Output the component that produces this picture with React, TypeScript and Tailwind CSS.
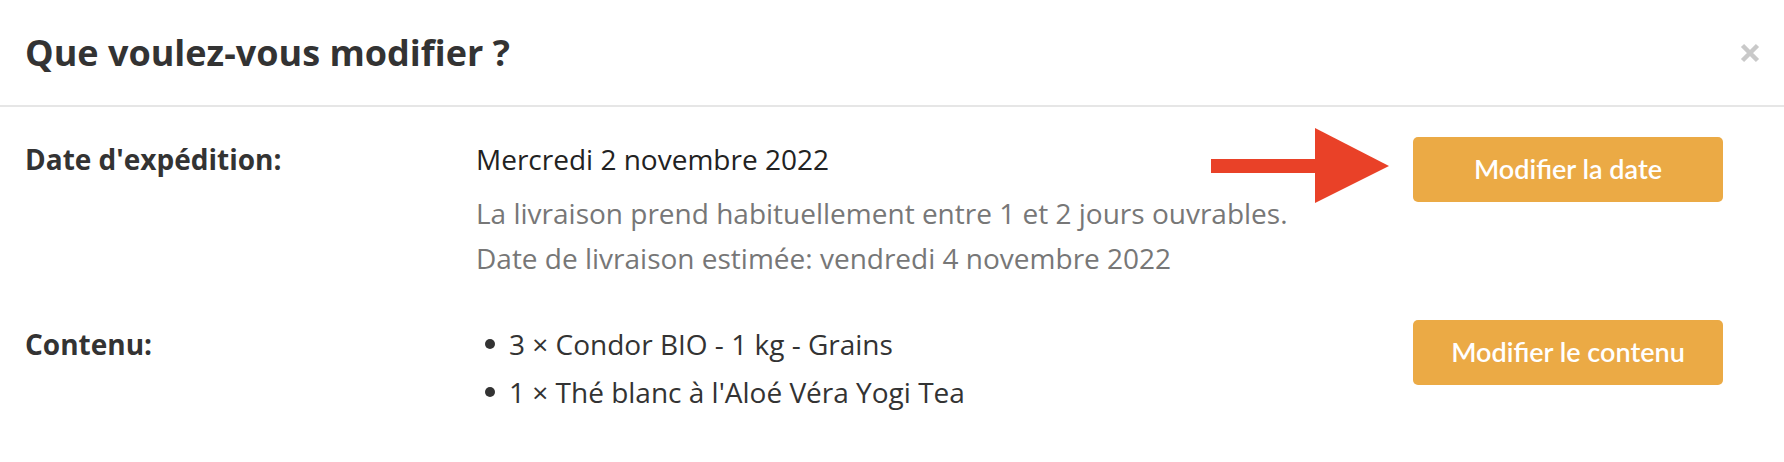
import React from "react";

const items = ["3 × Condor BIO - 1 kg - Grains", "1 × Thé blanc à l'Aloé Véra Yogi Tea"];

function CloseIcon() {
  return (
    <svg width="20" height="20" viewBox="0 0 20 20" aria-hidden="true">
      <path d="M2.5 2.5 L17.5 17.5 M17.5 2.5 L2.5 17.5" stroke="#c9c9c9" strokeWidth="4.5" />
    </svg>
  );
}

function Arrow() {
  return (
    <svg
      width="178"
      height="75"
      viewBox="0 0 178 75"
      className="pointer-events-none absolute right-[334px] top-[-9px]"
      aria-hidden="true"
    >
      <rect x="0" y="31" width="106" height="14" fill="#e94128" />
      <polygon points="104,0 178,38 104,75" fill="#e94128" />
    </svg>
  );
}

function ActionButton({ label, children }: { label: string; children?: React.ReactNode }) {
  return (
    <div className="relative shrink-0">
      {children}
      <button
        type="button"
        className="flex h-[65px] w-[310px] items-center justify-center rounded-[5px] bg-[#ebaa45] font-['Lato',sans-serif] text-[27px] font-semibold text-white"
      >
        {label}
      </button>
    </div>
  );
}

export default function App() {
  return (
    <div className="h-[462px] w-[1784px] bg-white font-['Open_Sans',sans-serif] text-[#333]">
      <header className="flex h-[107px] items-center justify-between border-b-2 border-[#e6e6e6] pl-[25px] pr-[24px]">
        <h1 className="text-[36px] font-bold text-[#333]">Que voulez-vous modifier ?</h1>
        <CloseIcon />
      </header>

      <div className="flex flex-col pl-[25px] pr-[61px] pt-[30px]">
        <section className="flex items-start">
          <h2 className="w-[451px] shrink-0 text-[28px] font-bold leading-[45px]">Date d'expédition:</h2>
          <div className="flex-1 text-[28px]">
            <p className="leading-[45px] text-[#222]">Mercredi 2 novembre 2022</p>
            <div className="mt-[9px] leading-[45px] text-[#777]">
              <p>La livraison prend habituellement entre 1 et 2 jours ouvrables.</p>
              <p>Date de livraison estimée: vendredi 4 novembre 2022</p>
            </div>
          </div>
          <ActionButton label="Modifier la date">
            <Arrow />
          </ActionButton>
        </section>

        <section className="mt-[39px] flex items-start">
          <h2 className="w-[451px] shrink-0 text-[28px] font-bold leading-[48px]">Contenu:</h2>
          <ul className="flex-1 text-[28px] leading-[48px] text-[#333]">
            {items.map((it) => (
              <li key={it} className="flex items-center">
                <span className="ml-[9px] mr-[14px] h-[10px] w-[10px] rounded-full bg-[#333]" />
                {it}
              </li>
            ))}
          </ul>
          <ActionButton label="Modifier le contenu" />
        </section>
      </div>
    </div>
  );
}
